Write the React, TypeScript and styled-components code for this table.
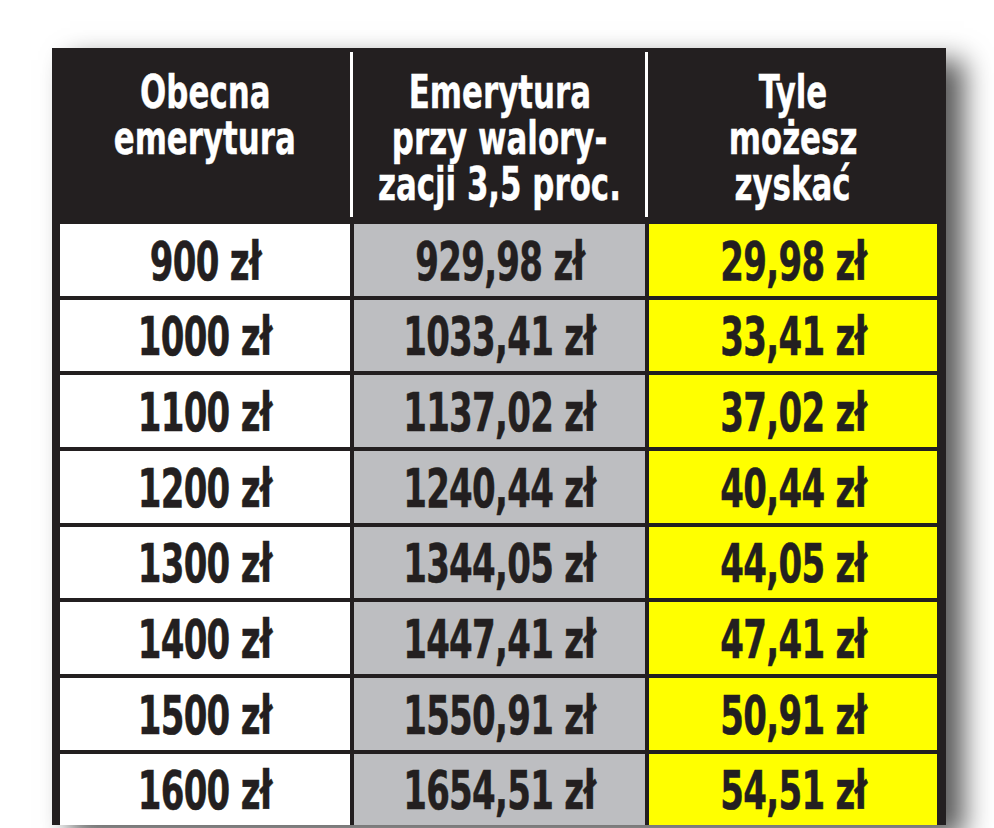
import React from "react";
import styled, { createGlobalStyle } from "styled-components";

const GlobalStyle = createGlobalStyle`
  html, body { margin: 0; padding: 0; background: #ffffff; }
  body { font-family: "DejaVu Sans Condensed", "DejaVu Sans", "Liberation Sans", sans-serif; }
`;

const Page = styled.div`
  padding: 48px 0 0 52px;
  height: 828px;
  box-sizing: border-box;
  overflow: hidden;
`;

const Table = styled.div`
  width: 894px;
  box-sizing: border-box;
  background: #231f20;
  padding: 0 9px 0 8px;
  box-shadow: 18px 12px 26px rgba(0, 0, 0, 0.65);
`;

const HeaderRow = styled.div`
  display: grid;
  grid-template-columns: 290px 4px 291px 4px 288px;
  height: 174px;
`;

const HeaderCell = styled.div`
  color: #ffffff;
  font-weight: 700;
  font-size: 47px;
  line-height: 46px;
  padding-top: 21px;
  min-width: 0;
  -webkit-text-stroke: 0.4px #ffffff;
`;

const HeaderLine = styled.div`
  height: 46px;
  display: flex;
  justify-content: center;
`;

const HeaderDivider = styled.div`
  background: #ffffff;
  margin: 4px 1px 5px 0;
`;

const Body = styled.div`
  display: grid;
  grid-template-columns: 290px 291px 288px;
  grid-auto-rows: 71.67px;
  column-gap: 4px;
  row-gap: 4px;
  padding-top: 2px;
`;

type Tone = "white" | "gray" | "yellow";
const toneColor: Record<Tone, string> = {
  white: "#ffffff",
  gray: "#bdbec1",
  yellow: "#ffff00",
};

const Cell = styled.div<{ $tone: Tone }>`
  background: ${(p) => toneColor[p.$tone]};
  display: flex;
  align-items: center;
  justify-content: center;
  color: #231f20;
  font-weight: 700;
  font-size: 54px;
  line-height: 1;
  padding-top: 4px;
  box-sizing: border-box;
  overflow: hidden;
  -webkit-text-stroke: 0.5px #231f20;
`;

const Squeeze = styled.span<{ $sx: number; $ls?: number }>`
  display: inline-block;
  flex: none;
  white-space: nowrap;
  letter-spacing: ${(p) => p.$ls ?? 0}px;
  transform: scaleX(${(p) => p.$sx});
`;

const rows: [string, string, string][] = [
  ["900 zł", "929,98 zł", "29,98 zł"],
  ["1000 zł", "1033,41 zł", "33,41 zł"],
  ["1100 zł", "1137,02 zł", "37,02 zł"],
  ["1200 zł", "1240,44 zł", "40,44 zł"],
  ["1300 zł", "1344,05 zł", "44,05 zł"],
  ["1400 zł", "1447,41 zł", "47,41 zł"],
  ["1500 zł", "1550,91 zł", "50,91 zł"],
  ["1600 zł", "1654,51 zł", "54,51 zł"],
];

const headers: string[][] = [
  ["Obecna", "emerytura"],
  ["Emerytura", "przy walory-", "zacji 3,5 proc."],
  ["Tyle", "możesz", "zyskać"],
];

export default function App() {
  return (
    <>
      <GlobalStyle />
      <Page>
        <Table>
          <HeaderRow>
            {headers.map((lines, i) => (
              <React.Fragment key={i}>
                {i > 0 && <HeaderDivider />}
                <HeaderCell>
                  {lines.map((l) => (
                    <HeaderLine key={l}>
                      <Squeeze $sx={0.73}>{l}</Squeeze>
                    </HeaderLine>
                  ))}
                </HeaderCell>
              </React.Fragment>
            ))}
          </HeaderRow>
          <Body>
            {rows.map((r) => (
              <React.Fragment key={r[0]}>
                <Cell $tone="white">
                  <Squeeze $sx={0.7} $ls={-1}>{r[0]}</Squeeze>
                </Cell>
                <Cell $tone="gray">
                  <Squeeze $sx={0.7} $ls={-1}>{r[1]}</Squeeze>
                </Cell>
                <Cell $tone="yellow">
                  <Squeeze $sx={0.7} $ls={-1}>{r[2]}</Squeeze>
                </Cell>
              </React.Fragment>
            ))}
          </Body>
        </Table>
      </Page>
    </>
  );
}
